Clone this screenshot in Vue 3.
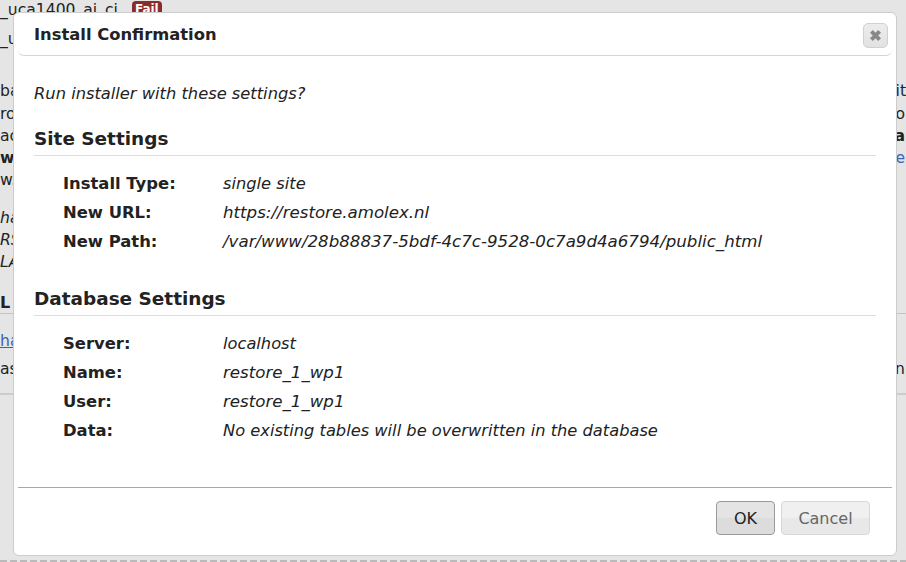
<template>
  <div class="page">
    <!-- page behind the dialog, only the edges show -->
    <div class="behind">
      <div class="first"><span>_uca1400_ai_ci</span><span class="badge">Fail</span></div>
      <div class="second">_u</div>
      <div class="para">
        <div class="row line"><span>ba</span><span>sit</span></div>
        <div class="row line"><span>ro</span><span class="inset">o</span></div>
        <div class="row line"><span>ac</span><b class="inset">a</b></div>
        <div class="row line"><b>wi</b><a class="inset">e</a></div>
        <div class="row line"><span>w.</span></div>
      </div>
      <div class="para notes">
        <div class="line"><i>ha</i></div>
        <div class="line"><i>RS</i></div>
        <div class="line"><i>LA</i></div>
      </div>
      <div class="heading"><b>L</b></div>
      <div class="links">
        <div class="line"><a class="link">ha</a></div>
        <div class="row line"><span>as</span><span class="inset">n</span></div>
      </div>
      <div class="dashes"></div>
    </div>

    <div class="modal">
      <div class="modal-header">
        <h5 class="modal-title">Install Confirmation</h5>
        <button type="button" class="btn-close" aria-label="Close">
          <svg width="13" height="13" viewBox="0 0 13 13">
            <path d="M2.4 2.4 10.6 10.6M10.6 2.4 2.4 10.6" fill="none" stroke="#888" stroke-width="4" />
          </svg>
        </button>
      </div>

      <div class="modal-body">
        <p class="intro">Run installer with these settings?</p>
        <section v-for="group in groups" :key="group.title" class="group">
          <h3>{{ group.title }}</h3>
          <div class="settings">
            <template v-for="item in group.items" :key="item.label">
              <strong>{{ item.label }}:</strong>
              <em :class="{ wide: item.wide }">{{ item.value }}</em>
            </template>
          </div>
        </section>
      </div>

      <div class="modal-footer">
        <button type="button" class="btn primary">OK</button>
        <button type="button" class="btn">Cancel</button>
      </div>
    </div>
  </div>
</template>

<script setup>
const groups = [
  {
    title: "Site Settings",
    items: [
      { label: "Install Type", value: "single site" },
      { label: "New URL", value: "https://restore.amolex.nl", wide: true },
      { label: "New Path", value: "/var/www/28b88837-5bdf-4c7c-9528-0c7a9d4a6794/public_html", wide: true },
    ],
  },
  {
    title: "Database Settings",
    items: [
      { label: "Server", value: "localhost" },
      { label: "Name", value: "restore_1_wp1", wide: true },
      { label: "User", value: "restore_1_wp1", wide: true },
      { label: "Data", value: "No existing tables will be overwritten in the database" },
    ],
  },
];
</script>

<style>
html,
body {
  margin: 0;
  overflow: hidden;
}
</style>

<style scoped>
.page {
  position: relative;
  width: 906px;
  height: 562px;
  overflow: hidden;
  background: #e5e5e5;
  font-family: "DejaVu Sans", Verdana, sans-serif;
  font-size: 15.6px;
  color: #222;
}

.behind {
  display: flex;
  flex-direction: column;
  height: 100%;
}

.row {
  display: flex;
  justify-content: space-between;
}

.inset {
  margin-right: 1px;
}

.first {
  display: flex;
  gap: 14px;
  height: 24px;
  line-height: 21px;
}

.second {
  margin-top: 3px;
  line-height: 24px;
}

.badge {
  background: #8b2c2c;
  color: #fff;
  font-size: 12px;
  font-weight: bold;
  line-height: 16px;
  height: 18px;
  padding: 0 3px;
  border-radius: 4px;
  margin-top: 1px;
}

.para {
  margin-top: 30.5px;
}

.line {
  line-height: 20px;
  height: 22.3px;
}

.notes {
  margin-top: 15px;
}

.heading {
  margin-top: 16px;
  font-size: 16px;
  line-height: 24px;
  height: 22px;
  border-bottom: 1px solid #c4c4c4;
}

.links {
  padding-top: 17px;
  height: 63px;
  border-bottom: 2px solid #ccc;
}

.links .line + .line {
  margin-top: 6px;
}

.link,
.behind a {
  color: #3b62b0;
}

.link {
  text-decoration: underline;
}

.dashes {
  margin-top: 165px;
  height: 2px;
  background: repeating-linear-gradient(90deg, #bbb 0 7px, transparent 7px 10px);
}

.modal {
  position: absolute;
  left: 13px;
  top: 12px;
  width: 884px;
  height: 544px;
  box-sizing: border-box;
  background: #fff;
  border: 1px solid #ccc;
  border-radius: 6px;
  padding: 0 4px;
  display: flex;
  flex-direction: column;
}

.modal-header {
  display: flex;
  justify-content: space-between;
  align-items: flex-start;
  height: 43px;
  box-sizing: border-box;
  flex: none;
  border-bottom: 1px solid #d5d5d5;
  border-radius: 0 0 6px 6px;
  padding: 0 4px 0 16px;
}

.modal-title {
  margin: 12px 0 0;
  font-size: 16.35px;
  font-weight: bold;
  line-height: 20px;
}

.btn-close {
  margin-top: 10px;
  width: 25px;
  height: 25px;
  padding: 0;
  border: 1px solid #d0d0d0;
  border-radius: 5px;
  background: linear-gradient(#ececec, #e2e2e2);
  display: flex;
  align-items: center;
  justify-content: center;
}

.modal-body {
  flex: 1;
  padding: 0 16px;
}

.intro {
  margin: 28px 0 0;
  font-style: italic;
  font-size: 16.3px;
  line-height: 20px;
}

.group h3 {
  margin: 0;
  font-size: 18.45px;
  font-weight: bold;
  line-height: 24px;
  padding-bottom: 4px;
  border-bottom: 1px solid #ddd;
}

.group {
  margin-top: 23px;
}

.group + .group {
  margin-top: 31px;
}

.settings {
  margin-top: 13px;
  padding-left: 29px;
  display: grid;
  grid-template-columns: 160px 1fr;
  grid-auto-rows: 29px;
  font-size: 16.25px;
  line-height: 29px;
}

.settings strong {
  font-size: 16.4px;
}

.settings .wide {
  font-size: 16.65px;
}

.modal-footer {
  flex: none;
  height: 68px;
  border-top: 1px solid #aaa;
  display: flex;
  justify-content: flex-end;
  gap: 6px;
  padding: 13px 22px 0 0;
  box-sizing: border-box;
}

.btn {
  width: 89px;
  height: 34px;
  box-sizing: border-box;
  padding: 0;
  font-family: inherit;
  font-size: 16px;
  color: #666;
  border: 1px solid #d8d8d8;
  border-radius: 4px;
  background: linear-gradient(#f0f0f0 50%, #e8e8e8 50%);
}

.btn.primary {
  width: 59px;
  color: #222;
  border-color: #999;
  background: linear-gradient(#e4e4e4 50%, #dcdcdc 50%);
}
</style>
